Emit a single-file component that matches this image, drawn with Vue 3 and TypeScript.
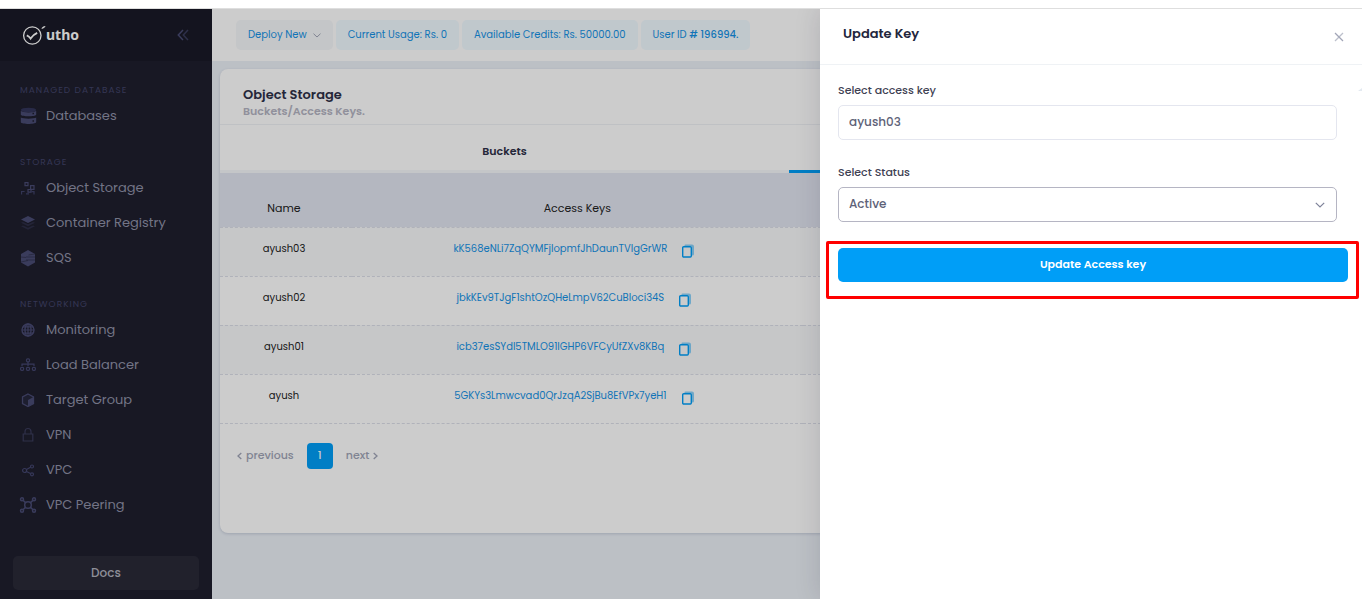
<script setup lang="ts">
import { ref } from 'vue'

interface NavItem {
  label: string
  icon: string
}
interface NavGroup {
  title: string
  items: NavItem[]
}
interface AccessKey {
  name: string
  key: string
}

const groups: NavGroup[] = [
  { title: 'Managed Database', items: [{ label: 'Databases', icon: 'database' }] },
  {
    title: 'Storage',
    items: [
      { label: 'Object Storage', icon: 'object' },
      { label: 'Container Registry', icon: 'layers' },
      { label: 'SQS', icon: 'queue' },
    ],
  },
  {
    title: 'Networking',
    items: [
      { label: 'Monitoring', icon: 'globe' },
      { label: 'Load Balancer', icon: 'balancer' },
      { label: 'Target Group', icon: 'cube' },
      { label: 'VPN', icon: 'lock' },
      { label: 'VPC', icon: 'share' },
      { label: 'VPC Peering', icon: 'peering' },
    ],
  },
]

const pills: string[] = ['Current Usage: Rs. 0', 'Available Credits: Rs. 50000.00']

const keys: AccessKey[] = [
  { name: 'ayush03', key: 'kK568eNLi7ZqQYMFjlopmfJhDaunTVIgGrWR' },
  { name: 'ayush02', key: 'jbkKEv9TJgF1shtOzQHeLmpV62CuBIoci34S' },
  { name: 'ayush01', key: 'icb37esSYdI5TMLO91IGHP6VFCyUfZXv8KBq' },
  { name: 'ayush', key: '5GKYs3Lmwcvad0QrJzqA2SjBu8EfVPx7yeH1' },
]

const accessKey = ref('ayush03')
const status = ref('Active')
</script>

<template>
  <div class="page">
    <div class="strip"></div>
    <div class="shell">
      <aside class="sidebar">
        <div class="brand">
          <a href="#" class="logo">
            <svg width="24" height="22" viewBox="0 0 24 22" fill="none" stroke="#fff">
              <circle cx="10.300" cy="11.500" r="8.700" stroke-width="1.300" />
              <path d="M4.800 11.300q2.200.9 3.800 3.200 2.600-4 6.600-5.700" stroke-width="1.900" />
              <path d="M19.500 5c.3-1.700 1.400-2.800 4-3-.4 1.400-1.600 2.300-4 3z" fill="#fff" stroke="none" />
            </svg>
            <span>utho</span>
          </a>
          <button class="collapse" type="button" aria-label="Collapse menu">
            <svg width="12" height="12" viewBox="0 0 12 12" fill="none" stroke-width="1.500">
              <path d="M6 1L1.300 6 6 11" stroke="#494b74" />
              <path d="M11 1L6.300 6l4.700 5" stroke="#393b5c" />
            </svg>
          </button>
        </div>
        <nav class="nav">
          <div v-for="g in groups" :key="g.title" class="group">
            <h2>{{ g.title }}</h2>
            <a v-for="item in g.items" :key="item.label" href="#">
              <svg class="ico" width="18" height="18" viewBox="0 0 18 18">
                <g v-if="item.icon === 'database'" fill="#494b74">
                  <ellipse cx="9.500" cy="3" rx="7.600" ry="2.300" fill="#33355a" />
                  <path d="M1.800 3.800c2 2.300 13.400 2.300 15.400 0v3.900c-1 2.100-14.400 2.100-15.400 0z" />
                  <path d="M1.800 10.500c2 1.500 13.400 1.500 15.400 0v4.700c-1 2.300-14.400 2.300-15.400 0z" />
                  <path d="M13.500 6.500h1.500M13.500 14h1.500" stroke="#1e1e2d" stroke-width="1.500" />
                </g>
                <g v-else-if="item.icon === 'object'" fill="none" stroke="#494b74" stroke-width="1.200">
                  <path d="M6 3.600h3v3H6zM11.600 6.600H15v3.800h-3.400zM9 10.500h3v2.600H9z" />
                  <path d="M2.600 15.500v-3h3M7 14.800h3M12.500 12.600H15v3" stroke="#3f4168" />
                </g>
                <g v-else-if="item.icon === 'layers'">
                  <path d="M9 2l7 3.500L9 9 2 5.500z" fill="#494b74" />
                  <path d="M2 8.700l2-.8 5 2.300 5-2.300 2 .8-7 3.500zM2 12.200l2-.8 5 2.300 5-2.300 2 .8-7 3.500z" fill="#2d2e46" />
                </g>
                <g v-else-if="item.icon === 'queue'">
                  <path d="M9 1l7 4v8.500l-7 4-7-4V5z" fill="#494b74" />
                  <path d="M9.500 6l6.500-1M7 8h9M2 8l5 .5M7 11h9M2 13l7-1.500" stroke="#2d2e48" stroke-width=".7" />
                </g>
                <g v-else-if="item.icon === 'globe'" fill="none" stroke="#494b74" stroke-width="1.400">
                  <circle cx="9" cy="9" r="6" />
                  <ellipse cx="9" cy="9" rx="3" ry="6" />
                  <path d="M3 9h12M4 5.900h10M4 12.100h10M9 3v12" stroke-width="1.200" />
                </g>
                <g v-else-if="item.icon === 'balancer'" fill="none" stroke="#444670" stroke-width="1.200">
                  <rect x="7.500" y="2.800" width="3" height="3" rx="1" />
                  <path d="M9 6v4M3 10V8.200h12V10" />
                  <rect x="1.600" y="11.300" width="3" height="3" rx="1" />
                  <rect x="7.500" y="11.300" width="3" height="3" rx="1" />
                  <rect x="13.400" y="11.300" width="3" height="3" rx="1" />
                </g>
                <g v-else-if="item.icon === 'cube'">
                  <path d="M9 3l5.500 3v6.500L9 15.500l-5.500-3V6z" fill="#25263b" stroke="#494b74" stroke-width="1.300" />
                  <path d="M9 9l5.500-3v6.500L9 15.500z" fill="#494b74" />
                </g>
                <g v-else-if="item.icon === 'lock'" fill="none" stroke="#3b3c5c" stroke-width="1.200">
                  <path d="M4.200 8h9.600v7H4.200zM6 8V5.500c0-4 6-4 6 0V8" />
                </g>
                <g v-else-if="item.icon === 'share'" fill="none" stroke="#444670" stroke-width="1.200">
                  <circle cx="5.600" cy="9.500" r="2" />
                  <circle cx="13" cy="5.500" r="1.500" />
                  <circle cx="13" cy="13.300" r="1.500" />
                  <path d="M7.500 8.500l4-2.200M7.500 10.500l4 2" />
                </g>
                <g v-else fill="none" stroke="#494b74" stroke-width="1.500">
                  <circle cx="9" cy="9" r="3.300" />
                  <circle cx="3" cy="3.300" r="1.500" />
                  <circle cx="15" cy="3.300" r="1.500" />
                  <circle cx="3" cy="14.700" r="1.500" />
                  <circle cx="15" cy="14.700" r="1.500" />
                  <path d="M4 4.300l2.500 2.300M14 4.300l-2.500 2.300M4 13.700l2.500-2.300M14 13.700l-2.500-2.300" />
                </g>
              </svg>
              <span>{{ item.label }}</span>
            </a>
          </div>
        </nav>
        <button class="docs" type="button">Docs</button>
      </aside>

      <main class="main">
        <header class="topbar">
          <button class="pill deploy" type="button">
            Deploy New
            <svg width="8" height="5" viewBox="0 0 8 5" fill="none" stroke="#a1a5b7"><path d="M.5.700L4 4 7.500.700" /></svg>
          </button>
          <button v-for="p in pills" :key="p" class="pill" type="button">{{ p }}</button>
          <button class="pill user" type="button"><span>User ID <b># 196994.</b></span></button>
        </header>

        <section class="card">
          <div class="card-head">
            <h1>Object Storage</h1>
            <p>Buckets/Access Keys.</p>
          </div>
          <div class="tabs">
            <button type="button">Buckets</button>
            <button type="button" class="active" aria-label="Access Keys"></button>
          </div>
          <table>
            <colgroup>
              <col class="c-name" />
              <col class="c-key" />
              <col />
            </colgroup>
            <thead>
              <tr>
                <th>Name</th>
                <th>Access Keys</th>
                <th></th>
              </tr>
            </thead>
            <tbody>
              <tr v-for="row in keys" :key="row.name">
                <td>{{ row.name }}</td>
                <td>
                  <span class="key">
                    <a href="#">{{ row.key }}</a>
                    <button type="button" aria-label="Copy key">
                      <svg width="14" height="14" viewBox="0 0 14 14">
                        <path d="M3.500 2V1.500q0-1 1-1H11q2 0 2 2V10q0 1.500-1.500 1.500H11V4q0-2-2-2z" fill="#009ef7" opacity=".45" />
                        <rect x="1.700" y="2.700" width="8.600" height="10.300" rx="1" fill="none" stroke="#009ef7" stroke-width="1.400" />
                      </svg>
                    </button>
                  </span>
                </td>
                <td></td>
              </tr>
            </tbody>
          </table>
          <div class="pager">
            <button type="button">
              <svg width="5" height="8" viewBox="0 0 5 8" fill="none" stroke="#a1a5b7" stroke-width="1.300"><path d="M4.300 1L1 4l3.300 3" /></svg>
              previous
            </button>
            <button type="button" class="current">1</button>
            <button type="button">
              next
              <svg width="5" height="8" viewBox="0 0 5 8" fill="none" stroke="#a1a5b7" stroke-width="1.300"><path d="M.7 1L4 4 .7 7" /></svg>
            </button>
          </div>
        </section>
      </main>

      <div class="overlay"></div>

      <form class="drawer" @submit.prevent>
        <header>
          <h2>Update Key</h2>
          <button type="button" aria-label="Close">
            <svg width="10" height="10" viewBox="0 0 10 10" fill="none" stroke="#a1a5b7" stroke-width="1.200"><path d="M1 1l8 8" /><path d="M9 1L1 9" opacity=".7" /></svg>
          </button>
        </header>
        <div class="field">
          <label for="access-key">Select access key</label>
          <input id="access-key" v-model="accessKey" type="text" />
        </div>
        <div class="field">
          <label for="status">Select Status</label>
          <div class="select">
            <select id="status" v-model="status">
              <option>Active</option>
            </select>
            <svg width="10" height="6" viewBox="0 0 10 6" fill="none" stroke="#7e8299" stroke-width="1.200"><path d="M.8.800L5 5 9.200.800" /></svg>
          </div>
        </div>
        <div class="highlight">
          <button type="submit">Update Access key</button>
        </div>
        <i class="notch"></i>
      </form>
    </div>
  </div>
</template>

<style>
body {
  margin: 0;
}
</style>

<style scoped>
.page,
.page * {
  box-sizing: border-box;
}
.page {
  display: flex;
  flex-direction: column;
  min-height: 100vh;
  background: #fff;
  font-family: Poppins, Inter, 'Liberation Sans', sans-serif;
  font-size: 12px;
  color: #181c32;
}
h1,
h2,
p {
  margin: 0;
}
a {
  text-decoration: none;
}
button,
input,
select {
  font: inherit;
  margin: 0;
  padding: 0;
  border: 0;
  background: none;
}
svg {
  display: block;
  flex: none;
}
.strip {
  height: 9px;
  border-bottom: 1px solid #dedede;
}
.shell {
  position: relative;
  display: flex;
  flex: 1;
  overflow: hidden;
}

.sidebar {
  display: flex;
  flex-direction: column;
  flex: none;
  width: 212px;
  background: #1e1e2d;
}
.brand {
  display: flex;
  align-items: center;
  justify-content: space-between;
  height: 52px;
  padding: 0 23px 0 22px;
  background: #1a1a27;
}
.logo {
  display: flex;
  align-items: center;
  color: #fff;
  font-family: 'Noto Sans', 'Open Sans', sans-serif;
  font-size: 14px;
  font-weight: 700;
  line-height: 20px;
}
.nav {
  display: flex;
  flex-direction: column;
  flex: 1;
  gap: 22px;
  padding: 22px 0 34px;
}
.nav h2 {
  padding-left: 20px;
  color: #42446a;
  font-size: 9px;
  font-weight: 400;
  line-height: 15px;
  letter-spacing: 1px;
  text-transform: uppercase;
}
.nav a {
  display: flex;
  align-items: center;
  gap: 9px;
  height: 35px;
  padding-left: 19px;
  color: #9092a8;
  font-size: 13px;
}
.docs {
  height: 34px;
  margin: 0 13px 9px;
  border-radius: 5px;
  background: #2a2a38;
  color: #b2b3bf;
  font-size: 12px;
  font-weight: 500;
}

.main {
  flex: 1;
  min-width: 0;
  background: #ebf0f7;
}
.topbar {
  display: flex;
  align-items: center;
  gap: 3px;
  height: 52px;
  padding-left: 24px;
  background: #fff;
}
.pill {
  display: flex;
  align-items: center;
  gap: 6px;
  height: 30px;
  padding: 0 12px;
  border-radius: 5px;
  background: #f1faff;
  color: #1592e6;
  font-size: 10px;
  font-weight: 400;
  white-space: nowrap;
}
.pill.deploy {
  background: #f5f8fa;
}
.pill b {
  font-weight: 500;
}
.card {
  margin: 8px 4px 0 8px;
  padding-bottom: 64px;
  border-radius: 8px;
  background: #fff;
  box-shadow: 0 1px 3px rgba(60, 70, 110, 0.2);
}
.card-head {
  padding: 17px 23px 5px;
  border-bottom: 1px solid #eff2f5;
}
.card-head h1 {
  color: #2e3048;
  font-size: 13px;
  font-weight: 600;
  line-height: 17px;
}
.card-head p {
  color: #b5b5c3;
  font-size: 11px;
  font-weight: 600;
  line-height: 16px;
}
.tabs {
  display: grid;
  grid-template-columns: 1fr 1fr;
}
.tabs button {
  height: 48px;
  padding-top: 7px;
  border-bottom: 3px solid #f5f8fa;
  color: #2e3048;
  font-size: 11px;
  font-weight: 600;
}
.tabs .active {
  border-bottom-color: #009ef7;
}
table {
  width: 100%;
  border-collapse: collapse;
  table-layout: fixed;
  color: #222;
}
.c-name {
  width: 11.6%;
}
.c-key {
  width: 39.6%;
}
thead {
  background: #e1e5f1;
}
th {
  height: 54px;
  padding: 18px 4px 0 0;
  font-size: 11px;
  font-weight: 400;
}
th + th {
  padding-right: 0;
}
tr {
  border-bottom: 1px dashed #dcdfe9;
}
td {
  height: 49px;
  padding: 0 4px 5px 0;
  font-size: 10px;
  text-align: center;
}
td + td {
  padding-right: 2px;
}
tbody tr:nth-child(odd) {
  background: #f8f9fb;
}
.key {
  display: inline-flex;
  align-items: center;
  gap: 14px;
  padding-right: 4px;
}
.key a {
  color: #1592e6;
}
.key button {
  padding-top: 3px;
}
.pager {
  display: flex;
  align-items: center;
  gap: 13px;
  padding: 19px 17px 0;
}
.pager button {
  display: flex;
  align-items: center;
  gap: 4px;
  color: #a1a5b7;
  font-size: 11px;
  font-weight: 500;
}
.pager .current {
  justify-content: center;
  width: 26px;
  height: 26px;
  border-radius: 4px;
  background: #009ef7;
  color: #fff;
}

.overlay {
  position: absolute;
  inset: 0;
  background: rgba(0, 0, 0, 0.2);
}
.drawer {
  position: absolute;
  top: 0;
  right: 0;
  bottom: 0;
  width: 542px;
  max-width: 100%;
  background: #fff;
  box-shadow: 0 0 24px rgba(30, 20, 50, 0.15);
}
.drawer header {
  display: flex;
  align-items: center;
  justify-content: space-between;
  height: 56px;
  margin-bottom: 17px;
  padding: 0 18px 6px 23px;
  border-bottom: 1px solid #eff2f5;
}
.drawer h2 {
  color: #23263c;
  font-size: 13px;
  font-weight: 600;
}
.drawer header button {
  padding-top: 6px;
}
.field {
  margin: 0 25px 24px 18px;
}
.field label {
  display: block;
  margin-bottom: 6px;
  color: #3f4254;
  font-size: 11px;
  font-weight: 500;
  line-height: 17px;
}
.field input,
.field select {
  display: block;
  width: 100%;
  height: 35px;
  padding: 0 10px 2px;
  border: 1px solid #e4e6ef;
  border-radius: 5px;
  background: #fff;
  color: #5e6278;
  font-size: 12px;
  font-weight: 500;
  appearance: none;
  outline: none;
}
.field select {
  border-color: #b5b5c3;
}
.select {
  position: relative;
}
.select svg {
  position: absolute;
  top: 15px;
  right: 12px;
  pointer-events: none;
}
.highlight {
  margin: -5px 3px 0 6px;
  padding: 4px 8px 14px 9px;
  border: 3px solid #f00;
  border-radius: 2px;
}
.highlight button {
  display: block;
  width: 100%;
  height: 34px;
  padding-bottom: 2px;
  border-radius: 5px;
  background: #009ef7;
  color: #fff;
  font-size: 11px;
  font-weight: 600;
}
.notch {
  position: absolute;
  top: 79px;
  right: 0;
  border: solid transparent;
  border-width: 0 0 3px 4px;
  border-bottom-color: #e4eaf1;
}
</style>
